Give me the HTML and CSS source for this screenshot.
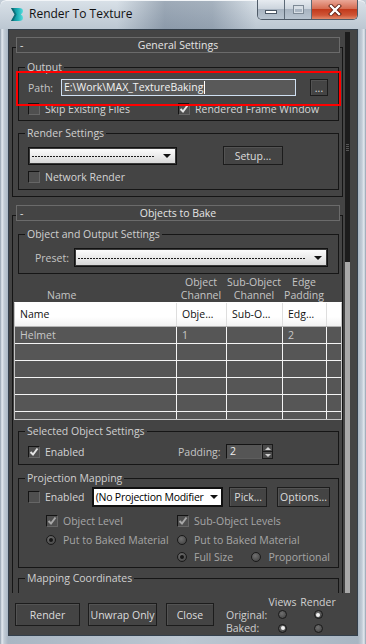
FILE: index.html
```html
<!DOCTYPE html>
<html lang="en">
<head>
    <meta charset="UTF-8">
    <meta name="viewport" content="width=device-width, initial-scale=1.0">
    <title>Render To Texture</title>
    <link rel="stylesheet" href="styles.css">
</head>
<body>
<div class="window">
    <!-- Title bar -->
    <div class="titlebar">
        <svg class="app-icon" width="14" height="15" viewBox="0 0 14 15">
            <defs>
                <linearGradient id="iconGrad" x1="0" x2="1" y1="0" y2="0">
                    <stop offset="0" stop-color="#0b6f78"/>
                    <stop offset="0.5" stop-color="#17a9b1"/>
                    <stop offset="1" stop-color="#56dcdc"/>
                </linearGradient>
            </defs>
            <path d="M1 1 H9 Q13 1 13 4.3 Q13 6.4 10.8 7.5 Q13 8.6 13 10.7 Q13 14 9 14 H1 L4.6 7.5 Z" fill="url(#iconGrad)"/>
            <path d="M1 1 L4.6 7.5 L1 14 L3 14 L6.6 7.5 L3 1 Z" fill="#0a5560" opacity="0.55"/>
        </svg>
        <span class="title">Render To Texture</span>
        <div class="caption">
            <span class="cap-btn cap-min"><span class="min-glyph"></span></span>
            <span class="cap-btn cap-max"><span class="max-glyph"></span></span>
            <span class="cap-btn cap-close">
                <svg width="14" height="12" viewBox="0 0 14 12">
                    <path d="M3 2 L11 10 M11 2 L3 10" stroke="#5a1c10" stroke-width="4" stroke-linecap="square"/>
                    <path d="M3 2 L11 10 M11 2 L3 10" stroke="#ffffff" stroke-width="2.4" stroke-linecap="square"/>
                </svg>
            </span>
        </div>
    </div>

    <!-- Dialog body -->
    <div class="client">
        <div class="main">
            <div class="panel">

                <!-- General Settings -->
                <div class="rollout">
                    <div class="rollout-head"><span class="minus">-</span><span>General Settings</span><span></span></div>

                    <div class="group group-output">
                        <div class="group-title">Output</div>
                        <div class="row path-row">
                            <span class="path-label">Path:</span>
                            <div class="textbox">E:\Work\MAX_TextureBaking<span class="caret"></span></div>
                            <button class="btn btn-dots">...</button>
                        </div>
                        <div class="row check-row">
                            <label class="check col-150"><span class="box"></span>Skip Existing Files</label>
                            <label class="check"><span class="box"><svg width="10" height="10" viewBox="0 0 10 10"><path d="M1.5 5 L4 7.5 L8.5 1.5" fill="none" stroke="#e4e4e4" stroke-width="2"/></svg></span>Rendered Frame Window</label>
                        </div>
                    </div>

                    <div class="group group-render">
                        <div class="group-title">Render Settings</div>
                        <div class="row setup-row">
                            <div class="combo combo-render"><span class="dashes"></span><span class="arrow"></span></div>
                            <button class="btn btn-setup">Setup...</button>
                        </div>
                        <div class="row net-row">
                            <label class="check"><span class="box"></span>Network Render</label>
                        </div>
                    </div>
                </div>

                <!-- Objects to Bake -->
                <div class="rollout rollout-bake">
                    <div class="rollout-head"><span class="minus">-</span><span>Objects to Bake</span><span></span></div>

                    <div class="group group-objout">
                        <div class="group-title">Object and Output Settings</div>
                        <div class="row preset-row">
                            <span class="preset-label">Preset:</span>
                            <div class="combo combo-preset"><span class="dashes"></span><span class="arrow"></span></div>
                        </div>
                    </div>

                    <div class="col-labels">
                        <div class="lbl-name">Name</div>
                        <div>Object<br>Channel</div>
                        <div>Sub-Object<br>Channel</div>
                        <div>Edge<br>Padding</div>
                        <div></div>
                    </div>

                    <div class="table">
                        <div class="trow thead">
                            <div>Name</div><div>Obje…</div><div>Sub-O…</div><div>Edg…</div><div></div>
                        </div>
                        <div class="trow">
                            <div>Helmet</div><div>1</div><div></div><div>2</div><div></div>
                        </div>
                        <div class="trow"><div></div><div></div><div></div><div></div><div></div></div>
                        <div class="trow"><div></div><div></div><div></div><div></div><div></div></div>
                        <div class="trow"><div></div><div></div><div></div><div></div><div></div></div>
                        <div class="trow"><div></div><div></div><div></div><div></div><div></div></div>
                        <div class="trow"><div></div><div></div><div></div><div></div><div></div></div>
                    </div>

                    <div class="group group-selected">
                        <div class="group-title">Selected Object Settings</div>
                        <div class="row padding-row">
                            <label class="check col-150"><span class="box"><svg width="10" height="10" viewBox="0 0 10 10"><path d="M1.5 5 L4 7.5 L8.5 1.5" fill="none" stroke="#e4e4e4" stroke-width="2"/></svg></span>Enabled</label>
                            <span class="padding-label">Padding:</span>
                            <div class="spinner">
                                <div class="spin-field">2</div>
                                <div class="spin-arrows">
                                    <span class="spin-up"></span>
                                    <span class="spin-down"></span>
                                </div>
                            </div>
                        </div>
                    </div>

                    <div class="group group-projection">
                        <div class="group-title">Projection Mapping</div>
                        <div class="row proj-row">
                            <label class="check proj-enabled"><span class="box"></span>Enabled</label>
                            <div class="combo combo-proj"><span class="combo-text">(No Projection Modifier</span><span class="arrow"></span></div>
                            <button class="btn btn-pick">Pick...</button>
                            <button class="btn btn-options">Options...</button>
                        </div>
                        <div class="row level-row disabled">
                            <label class="check col-131"><span class="box"><svg width="10" height="10" viewBox="0 0 10 10"><path d="M1.5 5 L4 7.5 L8.5 1.5" fill="none" stroke="#a8a8a8" stroke-width="2"/></svg></span>Object Level</label>
                            <label class="check"><span class="box"><svg width="10" height="10" viewBox="0 0 10 10"><path d="M1.5 5 L4 7.5 L8.5 1.5" fill="none" stroke="#a8a8a8" stroke-width="2"/></svg></span>Sub-Object Levels</label>
                        </div>
                        <div class="row radio-row disabled">
                            <label class="opt col-131"><span class="radio on"></span>Put to Baked Material</label>
                            <label class="opt"><span class="radio"></span>Put to Baked Material</label>
                        </div>
                        <div class="row size-row disabled">
                            <label class="opt col-81"><span class="radio on"></span>Full Size</label>
                            <label class="opt"><span class="radio"></span>Proportional</label>
                        </div>
                    </div>

                    <div class="group group-mapping">
                        <div class="group-title">Mapping Coordinates</div>
                    </div>
                </div>

            </div>
            <div class="scrollbar">
                <div class="thumb"><span class="grip"></span></div>
                <div class="track"></div>
            </div>
        </div>

        <!-- Bottom buttons -->
        <div class="bottom-bar">
            <button class="btn btn-render">Render</button>
            <button class="btn btn-unwrap">Unwrap Only</button>
            <button class="btn btn-close">Close</button>
            <div class="bake-views">
                <span></span><span class="center">Views</span><span class="center">Render</span>
                <span>Original:</span><span class="center"><span class="radio sm"></span></span><span class="center"><span class="radio sm on"></span></span>
                <span>Baked:</span><span class="center"><span class="radio sm on"></span></span><span class="center"><span class="radio sm"></span></span>
            </div>
        </div>
    </div>

    <!-- Highlight around the output path -->
    <div class="highlight"></div>
</div>
</body>
</html>
```

FILE: styles.css
```css
* {
    margin: 0;
    padding: 0;
    box-sizing: border-box;
}

body {
    width: 366px;
    height: 644px;
    overflow: hidden;
    font-family: "Open Sans", "Noto Sans", sans-serif;
    font-size: 10.5px;
    color: #d4d4d4;
    background: #c3cdd7;
}

button {
    font: inherit;
}

/* Window frame */
.window {
    position: relative;
    width: 366px;
    height: 644px;
    display: flex;
    flex-direction: column;
    background: linear-gradient(to right, #8e9cab 0, #e4eaf0 2px, #c2ccd6 4px, #a9b6c3 8px, #bcc7d2 50%, #a9b6c3 calc(100% - 8px), #c2ccd6 calc(100% - 4px), #e4eaf0 calc(100% - 2px), #8e9cab 100%);
    border-radius: 6px 6px 0 0;
}

.titlebar {
    flex: none;
    height: 29px;
    display: flex;
    align-items: flex-start;
    padding: 0 8px 0 10px;
    border-radius: 6px 6px 0 0;
    background:
        linear-gradient(to right, rgba(50, 70, 95, 0) 32%, rgba(50, 70, 95, 0.35) 45%, rgba(50, 70, 95, 0.3) 58%, rgba(50, 70, 95, 0) 70%),
        linear-gradient(#d9e1e8, #bcc7d2);
    box-shadow: inset 0 1px 0 #f2f5f8;
}

.app-icon {
    margin-top: 7px;
}

.title {
    margin: 6px 0 0 5px;
    font-size: 12px;
    line-height: 16px;
    color: #111;
}

.caption {
    margin-left: auto;
    display: flex;
    height: 20px;
    border: 1px solid #4f5b68;
    border-top: none;
    border-radius: 0 0 5px 5px;
    overflow: hidden;
}

.cap-btn {
    display: flex;
    align-items: center;
    justify-content: center;
    height: 19px;
}

.cap-min,
.cap-max {
    width: 27px;
    background: linear-gradient(#e6ebf0, #cdd5de 45%, #a8b4c1 50%, #b8c4d0);
    border-right: 1px solid #5d6a77;
}

.cap-close {
    flex: 1;
    width: 45px;
    background: linear-gradient(#eaa797, #d66d53 45%, #c23a1c 50%, #cf5536 80%, #e28a6b);
}

.min-glyph {
    width: 12px;
    height: 4px;
    margin-top: 5px;
    background: #fff;
    border: 1px solid #4a5664;
}

.max-glyph {
    width: 11px;
    height: 9px;
    border: 1px solid #7d8995;
    box-shadow: inset 0 0 0 1px #d7dee5, inset 0 2px 0 1px #d7dee5;
}

/* Client area */
.client {
    flex: none;
    height: 607px;
    margin: 0 8px;
    background: #444;
    border: 1px solid #34404c;
    display: flex;
    flex-direction: column;
    overflow: hidden;
}

.main {
    flex: none;
    height: 563px;
    display: flex;
}

.panel {
    flex: 1;
    overflow: hidden;
    padding-top: 7px;
}

.scrollbar {
    width: 5px;
    margin: 2px 7px 0 0;
    display: flex;
    flex-direction: column;
}

.scrollbar .thumb {
    height: 230px;
    background: #1c1c1c;
    display: flex;
    align-items: center;
    justify-content: center;
}

.scrollbar .grip {
    width: 3px;
    height: 7px;
    background: repeating-linear-gradient(#555 0 1px, transparent 1px 2px);
}

.scrollbar .track {
    flex: 1;
    background: #a8a8a8;
}

/* Rollouts */
.rollout {
    margin: 10px 2px 0 3px;
    border: 1px solid #151515;
    padding-bottom: 6px;
}

.rollout-bake {
    margin-top: 18px;
    padding-bottom: 0;
    border-bottom: none;
}

.rollout-head {
    margin: -11px 2px 0 3px;
    height: 16px;
    border: 1px solid #6b6b6b;
    background: #444;
    display: grid;
    grid-template-columns: 1fr auto 1fr;
    line-height: 14px;
    color: #e4e4e4;
}

.rollout-head .minus {
    padding-left: 3px;
}

/* Group boxes */
.group {
    margin: 12px 3px 0 5px;
    border: 1px solid #161616;
    padding: 0 8px 5px 9px;
}

.group-title {
    width: fit-content;
    margin: -7px 0 0 -3px;
    padding: 0 2px;
    background: #444;
    line-height: 13px;
    color: #d0d0d0;
}

.row {
    display: flex;
    align-items: center;
}

.group-output {
    margin-top: 14px;
}

.path-row {
    margin-top: 5px;
    height: 17px;
}

.path-label {
    width: 33px;
    color: #c4c4c4;
}

.textbox {
    width: 235px;
    height: 17px;
    background: #595959;
    border: 1px solid #cfe0f2;
    color: #f2f2f2;
    padding-left: 2px;
    display: flex;
    align-items: center;
    line-height: 15px;
}

.caret {
    width: 1px;
    height: 13px;
    margin-left: 1px;
    background: #fff;
}

.check-row {
    margin-top: 7px;
    height: 12px;
}

.check,
.opt {
    display: flex;
    align-items: center;
    line-height: 12px;
    white-space: nowrap;
}

.col-150 {
    width: 150px;
}

.col-131 {
    width: 131px;
}

.col-81 {
    width: 81px;
}

.box {
    flex: none;
    width: 12px;
    height: 12px;
    margin-right: 5px;
    border: 1px solid;
    border-color: #141414 #666 #666 #141414;
    background: #4f4f4f;
    display: flex;
    align-items: center;
    justify-content: center;
}

.radio {
    flex: none;
    width: 10px;
    height: 10px;
    margin-right: 7px;
    border-radius: 50%;
    border: 1px solid #1a1a1a;
    background: radial-gradient(circle at 40% 35%, #707070, #3c3c3c);
    display: flex;
    align-items: center;
    justify-content: center;
}

.radio.on::after {
    content: "";
    width: 4px;
    height: 4px;
    border-radius: 50%;
    background: #f2f2f2;
}

.disabled {
    color: #a6a6a6;
}

.disabled .radio.on::after {
    background: #161616;
}

/* Buttons */
.btn {
    background: #444;
    border: 1px solid #1c1c1c;
    box-shadow: inset 1px 1px 0 #535353;
    color: #dcdcdc;
    line-height: 14px;
}

.btn-dots {
    width: 18px;
    height: 17px;
    margin-left: 14px;
    line-height: 10px;
}

/* Combo boxes */
.combo {
    height: 18px;
    border: 1px solid #111;
    box-shadow: inset 0 0 0 1px #3a3a3a;
    background: linear-gradient(#fdfdfd, #ebebeb 50%, #d5d5d5);
    display: flex;
    align-items: center;
    padding: 0 5px 0 3px;
}

.combo .dashes {
    flex: 1;
    height: 1px;
    margin-top: 2px;
    background: repeating-linear-gradient(90deg, #1a1a1a 0 2px, transparent 2px 3px);
}

.combo .arrow {
    flex: none;
    margin-left: 9px;
    border-left: 4px solid transparent;
    border-right: 4px solid transparent;
    border-top: 4px solid #111;
}

.group-render {
    margin-top: 12px;
    padding-bottom: 6px;
}

.setup-row {
    margin-top: 6px;
    height: 19px;
}

.combo-render {
    width: 149px;
}

.btn-setup {
    width: 60px;
    height: 19px;
    margin-left: 46px;
}

.net-row {
    margin-top: 6px;
    height: 12px;
}

.group-objout {
    margin-top: 13px;
    padding-bottom: 6px;
}

.preset-row {
    margin-top: 7px;
    height: 19px;
    padding-left: 7px;
}

.preset-label {
    width: 39px;
    color: #c4c4c4;
}

.combo-preset {
    width: 254px;
    height: 19px;
}

/* Object list */
.col-labels {
    margin: 2px 0 0 1px;
    padding-left: 1px;
    display: grid;
    grid-template-columns: 161px 50px 56px 44px 1fr;
    line-height: 13px;
    color: #c4c4c4;
    text-align: center;
}

.col-labels .lbl-name {
    text-align: left;
    padding: 13px 0 0 32px;
}

.table {
    margin-left: 1px;
    height: 118px;
    overflow: hidden;
    border: 1px solid #c4c4c4;
    border-top-color: #fff;
    background: #565656;
}

.trow {
    display: grid;
    grid-template-columns: 161px 50px 56px 44px 1fr;
    height: 17px;
    border-bottom: 1px solid #f4f4f4;
    line-height: 16px;
    color: #c8c8c8;
}

.trow > div {
    padding-left: 5px;
    white-space: nowrap;
    overflow: hidden;
}

.trow > div + div {
    border-left: 1px solid #f4f4f4;
}

.thead {
    height: 24px;
    line-height: 22px;
    background: linear-gradient(#fff, #fff 60%, #f1f1f1);
    border-bottom: 1px solid #b4b4b4;
    color: #111;
}

.thead > div + div {
    border-left-color: #dedede;
}

/* Selected object settings */
.group-selected {
    margin-top: 11px;
}

.padding-row {
    margin-top: 6px;
    height: 15px;
}

.padding-label {
    width: 48px;
    color: #c4c4c4;
}

.spinner {
    display: flex;
    height: 15px;
}

.spin-field {
    width: 36px;
    border: 1px solid;
    border-color: #141414 #5e5e5e #5e5e5e #141414;
    background: #555;
    color: #eee;
    padding-left: 3px;
    line-height: 13px;
}

.spin-arrows {
    width: 11px;
    display: flex;
    flex-direction: column;
    border: 1px solid #1a1a1a;
    background: #4a4a4a;
}

.spin-up,
.spin-down {
    flex: 1;
    display: flex;
    align-items: center;
    justify-content: center;
}

.spin-up {
    border-bottom: 1px solid #1a1a1a;
}

.spin-up::after {
    content: "";
    border-left: 3px solid transparent;
    border-right: 3px solid transparent;
    border-bottom: 3px solid #cfcfcf;
}

.spin-down::after {
    content: "";
    border-left: 3px solid transparent;
    border-right: 3px solid transparent;
    border-top: 3px solid #cfcfcf;
}

/* Projection mapping */
.group-projection {
    margin-top: 13px;
    padding-bottom: 3px;
}

.proj-row {
    margin-top: 2px;
    height: 20px;
}

.proj-enabled {
    width: 64px;
}

.combo-proj {
    width: 132px;
    height: 20px;
    border: 2px solid #111;
    box-shadow: none;
    background: #fff;
    color: #000;
    padding: 0 3px 0 2px;
}

.combo-proj .combo-text {
    flex: 1;
    white-space: nowrap;
    font-size: 10.5px;
    letter-spacing: -0.25px;
}

.combo-proj .arrow {
    margin-left: 2px;
}

.btn-pick {
    width: 38px;
    height: 20px;
    margin-left: 6px;
}

.btn-options {
    width: 53px;
    height: 20px;
    margin-left: 10px;
}

.level-row {
    margin-top: 7px;
    height: 14px;
    padding-left: 18px;
}

.radio-row {
    margin-top: 5px;
    height: 14px;
    padding-left: 18px;
}

.size-row {
    margin-top: 3px;
    height: 14px;
    padding-left: 149px;
}

.group-mapping {
    margin-top: 10px;
    height: 40px;
}

/* Bottom bar */
.bottom-bar {
    flex: none;
    height: 42px;
    display: flex;
    align-items: flex-start;
}

.bottom-bar .btn {
    height: 23px;
    margin-top: 10px;
}

.btn-render {
    width: 65px;
    margin-left: 6px;
}

.btn-unwrap {
    width: 69px;
    margin-left: 8px;
}

.btn-close {
    width: 48px;
    margin-left: 9px;
}

.bake-views {
    margin: 3px 0 0 12px;
    display: grid;
    grid-template-columns: 41px 31px 40px;
    grid-template-rows: 12px 13px 14px;
    align-items: center;
    line-height: 12px;
    color: #d0d0d0;
}

.bake-views .center {
    display: flex;
    justify-content: center;
}

.radio.sm {
    width: 9px;
    height: 9px;
    margin-right: 0;
}

.radio.sm.on::after {
    width: 4px;
    height: 4px;
}

/* Red highlight drawn over the path row */
.highlight {
    position: absolute;
    left: 16px;
    top: 71px;
    width: 325px;
    height: 35px;
    border: 2px solid #f00;
}
```
